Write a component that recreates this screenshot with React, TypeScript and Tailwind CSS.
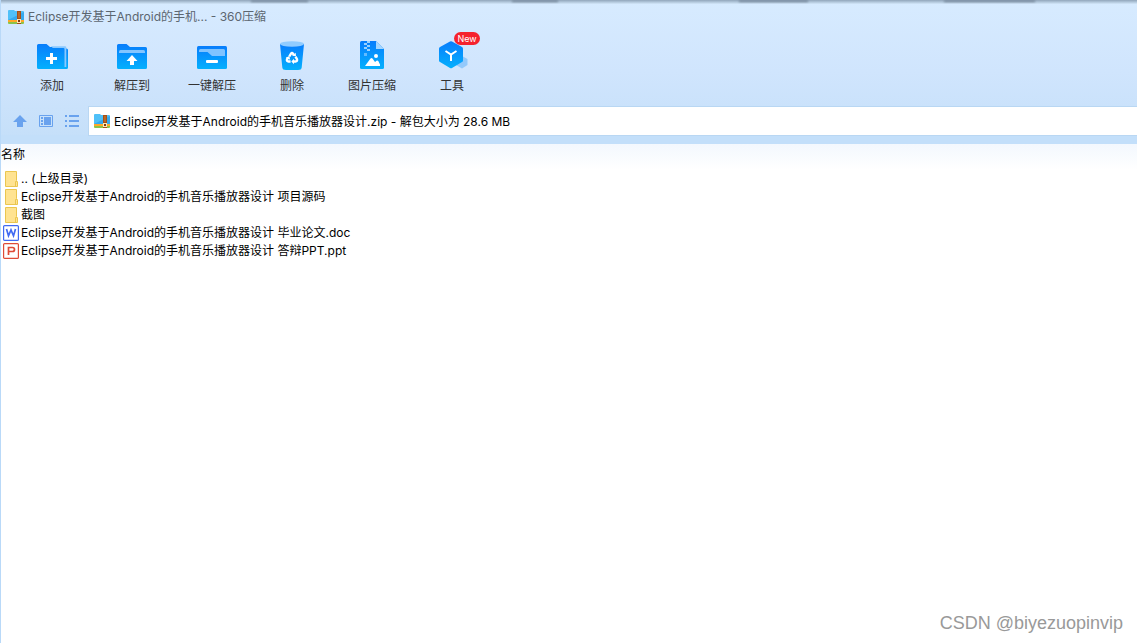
import type { ReactNode } from "react";

const Gradient = ({ id }: { id: string }) => (
  <defs>
    <linearGradient id={id} x1="0" y1="0" x2="0" y2="1">
      <stop offset="0" stopColor="#087dfc" />
      <stop offset="1" stopColor="#04b0fd" />
    </linearGradient>
  </defs>
);

const ToolIcon = ({ children }: { children: ReactNode }) => (
  <svg viewBox="0 0 40 32" className="h-8 w-10" aria-hidden="true">
    {children}
  </svg>
);

const AddIcon = () => (
  <ToolIcon>
    <Gradient id="add" />
    <path
      d="M5 5.5Q5 4 6.500 4H14.500L18 7H34V8.500H34.500Q36 8.500 36 10V27.500Q36 29 34.500 29H6.500Q5 29 5 27.500Z"
      fill="url(#add)"
    />
    <path d="M19 6.300H33Q34.300 6.300 34.300 7.600V27H32.500V9Q32.500 8 31.500 8H20.800Z" fill="#8ac9ff" />
    <path d="M18 13h3v4h4v3h-4v4h-3v-4h-4v-3h4z" fill="#fff" />
  </ToolIcon>
);

const ExtractIcon = () => (
  <ToolIcon>
    <Gradient id="extract" />
    <path
      d="M5 5.500Q5 4 6.500 4H14.500L18 7H33.500Q35 7 35 8.500V27.500Q35 29 33.500 29H6.500Q5 29 5 27.500Z"
      fill="url(#extract)"
    />
    <path d="M7 13V11.500Q7 10 8.500 10H31.500Q33 10 33 11.500V13Z" fill="#83c5ff" />
    <path d="M20 15L25.500 21H22V25H18V21H14.500Z" fill="#fff" />
  </ToolIcon>
);

const QuickIcon = () => (
  <ToolIcon>
    <Gradient id="quick" />
    <rect x="5" y="6" width="30" height="23" rx="1.500" fill="url(#quick)" />
    <path d="M7 10.500Q7 9 8.500 9H31.500Q33 9 33 10.500V16H20L15.500 12H7Z" fill="#80c3ff" />
    <rect x="14" y="20" width="12" height="3" rx="1" fill="#fff" />
  </ToolIcon>
);

const DeleteIcon = () => (
  <ToolIcon>
    <Gradient id="delete" />
    <path d="M8 4L10.300 27.500Q10.500 30 14 30H26Q29.500 30 29.700 27.500L32 4Z" fill="url(#delete)" />
    <ellipse cx="20" cy="4" rx="12" ry="2.700" fill="#91ccff" />
    <g fill="none" stroke="#fff" strokeWidth="2.400">
      <path d="M17.300 16.500L19 13.700Q20 12.300 21 13.700L21.800 15" />
      <path d="M23.500 16.700L25 19.200Q25.500 21.300 23.500 21.500H21.500" />
      <path d="M18.600 21.500H16.500Q14.500 21.300 15 19.200L16 17.800" />
    </g>
    <path d="M20.300 15.700L24 16.300L23.700 12.700ZM22 18.700V24.300L19.300 21.500ZM13.800 17.700L17.300 16L18.200 19.700Z" fill="#fff" />
  </ToolIcon>
);

const ImageIcon = () => (
  <ToolIcon>
    <Gradient id="image" />
    <path d="M8 2.500Q8 1 9.500 1H24L32 9V27.500Q32 29 30.500 29H9.500Q8 29 8 27.500Z" fill="url(#image)" />
    <path d="M24 1L32 9H24Z" fill="#a5d6ff" />
    <path d="M15 1h3v2h-3zM12 3h3v2h-3zM15 5h3v2h-3zM12 7h3v2h-3zM15 9h3v2h-3z" fill="#9bd1ff" />
    <path d="M12 13h3v3h-3z" fill="#62bbff" />
    <circle cx="24" cy="16" r="2" fill="#fff" />
    <path d="M13 26L18.500 18.500Q19.500 17.500 20.500 18.500L23 22L24.500 20.700Q25.500 20 26.300 21L28 24.500V26Z" fill="#fff" />
  </ToolIcon>
);

const BoxIcon = () => (
  <ToolIcon>
    <Gradient id="box" />
    <path d="M30 16L35.500 19V25L30 28.500L24 25V19Z" fill="#93c9fb" />
    <path
      d="M18 1.500Q19 1 20 1.500L30 7Q31 7.600 31 8.700V20.500Q31 21.500 30 22L20 28Q19 28.600 18 28L8 22Q7 21.500 7 20.500V8.700Q7 7.600 8 7Z"
      fill="url(#box)"
    />
    <path d="M13.500 11L19 14.500L24.500 11M19 14.500V21" fill="none" stroke="#fff" strokeWidth="2" />
  </ToolIcon>
);

const ZipIcon = () => (
  <svg viewBox="0 0 16 16" className="size-4 shrink-0" aria-hidden="true">
    <path d="M0 2Q0 1 1 1H6L7 2H15Q16 2 16 3V12H0Z" fill="#4fc0f8" />
    <path d="M0 11L16 3V11Z" fill="#35a9ee" />
    <path d="M0 11H16V13H0Z" fill="#ffa827" />
    <path d="M0 13H16V14Q16 15 15 15H1Q0 15 0 14Z" fill="#8bc34a" />
    <path d="M9 2H13V15H9Z" fill="#a64f17" />
    <path d="M10.500 3h1v6h-1z" fill="#c98238" />
    <path d="M9 10H13V14H9Z" fill="#ffe7b5" />
    <path d="M10 11h2v2h-2z" fill="#7c3b14" />
  </svg>
);

const FolderIcon = () => (
  <svg viewBox="0 0 16 16" className="size-4" aria-hidden="true">
    <path d="M2.500 .5H13.500V9.500L14.500 11V15.500H2.500Z" fill="#ffe391" stroke="#ebc64f" />
    <path d="M12.500 15V10.500H14" fill="none" stroke="#ebc64f" />
  </svg>
);

const WordIcon = () => (
  <svg viewBox="0 0 16 16" className="size-4" aria-hidden="true">
    <rect x=".6" y=".6" width="14.800" height="14.800" rx="1" fill="#fff" stroke="#416af2" strokeWidth="1.200" />
    <path d="M3.500 4L5.500 10.800L8 5L10.500 10.800L12.500 4" fill="none" stroke="#416af2" strokeWidth="1.700" />
  </svg>
);

const SlidesIcon = () => (
  <svg viewBox="0 0 16 16" className="size-4" aria-hidden="true">
    <rect x=".6" y=".6" width="14.800" height="14.800" rx="1" fill="#fff" stroke="#df4b37" strokeWidth="1.200" />
    <path d="M5.500 12V4.500H9.500Q11.500 4.500 11.500 6.500T9.500 8.500H5.500" fill="none" stroke="#df4b37" strokeWidth="1.700" />
  </svg>
);

const tools = [
  { label: "添加", icon: <AddIcon /> },
  { label: "解压到", icon: <ExtractIcon /> },
  { label: "一键解压", icon: <QuickIcon /> },
  { label: "删除", icon: <DeleteIcon /> },
  { label: "图片压缩", icon: <ImageIcon /> },
  { label: "工具", icon: <BoxIcon />, badge: "New" },
];

const files = [
  { name: ".. (上级目录)", icon: <FolderIcon /> },
  { name: "Eclipse开发基于Android的手机音乐播放器设计 项目源码", icon: <FolderIcon /> },
  { name: "截图", icon: <FolderIcon /> },
  { name: "Eclipse开发基于Android的手机音乐播放器设计 毕业论文.doc", icon: <WordIcon /> },
  { name: "Eclipse开发基于Android的手机音乐播放器设计 答辩PPT.ppt", icon: <SlidesIcon /> },
];

const NavButtons = () => (
  <nav className="flex w-22 shrink-0 items-center gap-2.5 pl-[11px] text-[#69a2ee]">
    <button type="button" aria-label="上级" className="size-4">
      <svg viewBox="0 0 16 16" fill="currentColor">
        <path d="M8 2L15 9H11V14H5V9H1Z" />
      </svg>
    </button>
    <button type="button" aria-label="预览" className="size-4">
      <svg viewBox="0 0 16 16" fill="currentColor">
        <path d="M1.500 2.500h13v11h-13z" fill="none" stroke="currentColor" />
        <path d="M3 4h2v2H3zM3 7h2v2H3zM3 10h2v2H3zM6 4h7v8H6z" />
      </svg>
    </button>
    <button type="button" aria-label="列表" className="size-4">
      <svg viewBox="0 0 16 16" fill="currentColor">
        <path d="M1 2h2v2H1zM5 2h10v2H5zM1 7h2v2H1zM5 7h10v2H5zM1 12h2v2H1zM5 12h10v2H5z" />
      </svg>
    </button>
  </nav>
);

const App = () => {
  return (
    <div className="relative flex min-h-screen flex-col border-l border-[#b9d9f8] bg-white font-['Inter','Noto_Sans_CJK_SC',sans-serif] text-xs text-black">
      <header className="bg-linear-to-b from-[#d7ebff] via-[#d0e5fd] to-[#c4dff9]">
        {/* shadow of the window above */}
        <div className="flex h-1 bg-linear-to-b from-[#91a6bb] to-[#d3e7fa]">
          <div className="ml-[22%] h-0.5 w-[5%] bg-[#75869a] blur-[1px]" />
          <div className="ml-[18%] h-0.5 w-[4%] bg-[#75869a] blur-[1px]" />
          <div className="ml-[16%] h-0.5 w-[6%] bg-[#75869a] blur-[1px]" />
          <div className="ml-[12%] h-0.5 w-[8%] bg-[#75869a] blur-[1px]" />
        </div>

        <div className="flex h-[26px] items-center gap-1 pl-[7px] text-[#5c6670]">
          <ZipIcon />
          <h1>Eclipse开发基于Android的手机... - 360压缩</h1>
        </div>

        <div className="flex h-[77px] items-start pt-2.5 pl-[11px] text-[#333]">
          {tools.map((tool) => (
            <button key={tool.label} type="button" className="relative flex w-20 flex-col items-center gap-1">
              {tool.icon}
              <span className="leading-5">{tool.label}</span>
              {tool.badge && (
                <span className="absolute -top-2 left-[42px] h-[13px] w-[26px] rounded-full bg-[#f5222d] text-center text-[9px] leading-[13px] text-white">
                  {tool.badge}
                </span>
              )}
            </button>
          ))}
        </div>

        <div className="flex h-[28px]">
          <NavButtons />
          <label className="flex flex-1 items-center gap-1 bg-white pl-[5px] outline outline-[#b9d7f3]">
            <ZipIcon />
            <input
              type="text"
              aria-label="路径"
              readOnly
              value="Eclipse开发基于Android的手机音乐播放器设计.zip - 解包大小为 28.6 MB"
              className="h-5 flex-1 bg-transparent pb-0.5 outline-none"
            />
          </label>
        </div>
        <div className="h-[9px] bg-[#c3dffa]" />
      </header>

      <table className="w-full text-left">
        <thead>
          <tr className="h-[26px] bg-linear-to-b from-[#f3f8fe] to-white">
            <th className="p-0 pb-1 font-normal">名称</th>
          </tr>
        </thead>
        <tbody>
          {files.map((file) => (
            <tr key={file.name}>
              <td className="p-0">
                <div className="flex h-[18px] items-center gap-0.5 pl-0.5 whitespace-pre">
                  {file.icon}
                  {file.name}
                </div>
              </td>
            </tr>
          ))}
        </tbody>
      </table>

      <p className="absolute right-3.5 bottom-2 font-['Liberation_Sans',sans-serif] text-lg leading-6 text-[#999]">
        CSDN @biyezuopinvip
      </p>
    </div>
  );
};

export default App;
